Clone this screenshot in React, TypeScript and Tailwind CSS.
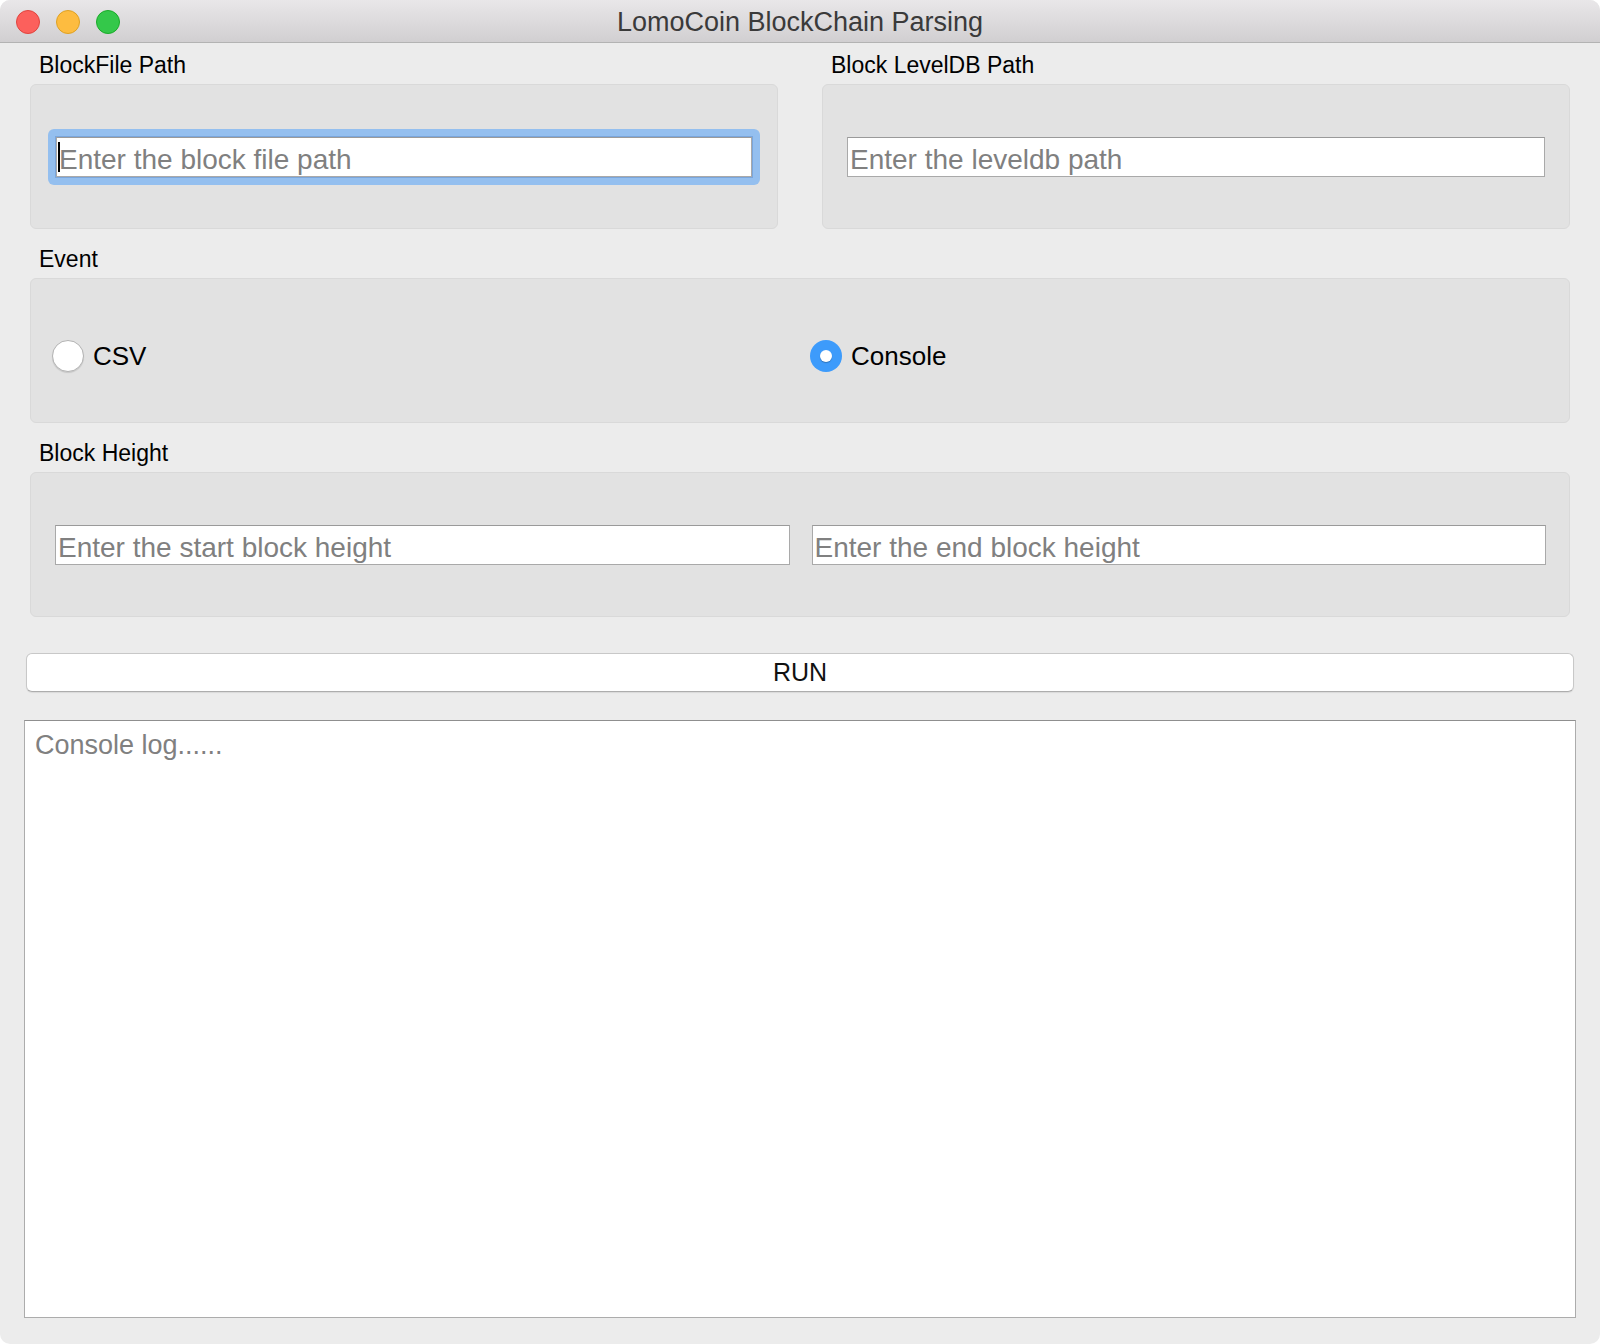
import React from "react";

const font = { fontFamily: '"Liberation Sans", Arial, sans-serif' };

function GroupLabel({ children }: { children: React.ReactNode }) {
  return <div className="h-[26px] pl-[9px] text-[23px] leading-[26px] text-black">{children}</div>;
}

function Box({ children, className = "" }: { children: React.ReactNode; className?: string }) {
  return (
    <div className={`mt-[6px] h-[145px] rounded-[6px] border border-[#d9d9d9] bg-[#e2e2e2] ${className}`}>
      {children}
    </div>
  );
}

function TextField({ placeholder }: { placeholder: string }) {
  return (
    <input
      readOnly
      placeholder={placeholder}
      className="h-[40px] w-full border border-[#a9a9a9] border-t-[#9a9a9a] bg-white pl-[2px] pt-[6px] text-[28px] text-black outline-none placeholder:text-[#808080]"
      style={font}
    />
  );
}

function Radio({ label, checked }: { label: string; checked?: boolean }) {
  return (
    <div className="flex items-center gap-[9px]">
      {checked ? (
        <span className="flex h-[32px] w-[32px] items-center justify-center rounded-full bg-[#3d9bfb]">
          <span className="h-[12px] w-[12px] rounded-full bg-white shadow-[0_1px_1px_rgba(0,0,0,0.25)]" />
        </span>
      ) : (
        <span className="h-[32px] w-[32px] rounded-full border border-[#b3b3b3] bg-white shadow-[0_1px_1px_rgba(0,0,0,0.12)]" />
      )}
      <span className="text-[26px] leading-[32px] text-black">{label}</span>
    </div>
  );
}

export default function App() {
  return (
    <div className="h-[1344px] w-[1600px] bg-white" style={font}>
      <div className="flex h-full flex-col overflow-hidden rounded-[10px] bg-[#ececec]">
        {/* Title bar */}
        <div className="relative h-[43px] shrink-0 border-b border-[#b3b3b3] bg-gradient-to-b from-[#e9e7e9] to-[#d1cfd1]">
          <div className="absolute left-[16px] top-[10px] flex gap-[16px]">
            <span className="h-[24px] w-[24px] rounded-full border border-[#e0443e] bg-[#fc605c]" />
            <span className="h-[24px] w-[24px] rounded-full border border-[#dea123] bg-[#fdbc40]" />
            <span className="h-[24px] w-[24px] rounded-full border border-[#1aab29] bg-[#34c84a]" />
          </div>
          <div className="h-[42px] text-center text-[27px] leading-[44px] text-[#3a3a3a]">
            LomoCoin BlockChain Parsing
          </div>
        </div>

        <div className="flex flex-1 flex-col px-[30px] pb-[26px] pt-[9px]">
          {/* Paths */}
          <div className="grid grid-cols-2 gap-[44px]">
            <div>
              <GroupLabel>BlockFile Path</GroupLabel>
              <Box className="flex items-center px-[17px]">
                <div className="relative w-full rounded-[6px] bg-[#94bfef] p-[7px]">
                  <div className="border border-[#7aa6dc]">
                    <TextField placeholder="Enter the block file path" />
                  </div>
                  <span className="absolute left-[10px] top-[13px] h-[30px] w-[2px] bg-black" />
                </div>
              </Box>
            </div>
            <div>
              <GroupLabel>Block LevelDB Path</GroupLabel>
              <Box className="flex items-center px-[24px]">
                <TextField placeholder="Enter the leveldb path" />
              </Box>
            </div>
          </div>

          {/* Event */}
          <div className="mt-[17px]">
            <GroupLabel>Event</GroupLabel>
            <Box className="grid grid-cols-2 items-center gap-[20px] px-[21px] pt-[10px]">
              <Radio label="CSV" />
              <Radio label="Console" checked />
            </Box>
          </div>

          {/* Block height */}
          <div className="mt-[17px]">
            <GroupLabel>Block Height</GroupLabel>
            <Box className="grid grid-cols-2 items-center gap-[22px] pl-[24px] pr-[23px]">
              <TextField placeholder="Enter the start block height" />
              <TextField placeholder="Enter the end block height" />
            </Box>
          </div>

          <button className="mx-[-4px] mt-[36px] h-[39px] shrink-0 rounded-[6px] border border-[#c8c8c8] border-b-[#adadad] bg-white text-[25px] text-[#111] shadow-[0_1px_1px_rgba(0,0,0,0.08)]">
            RUN
          </button>

          <div className="mx-[-6px] mt-[28px] flex-1 border border-[#acacac] border-t-[#8f8f8f] bg-white px-[10px] pt-[9px] text-[27px] leading-[31px] text-[#808080]">
            Console log......
          </div>
        </div>
      </div>
    </div>
  );
}
